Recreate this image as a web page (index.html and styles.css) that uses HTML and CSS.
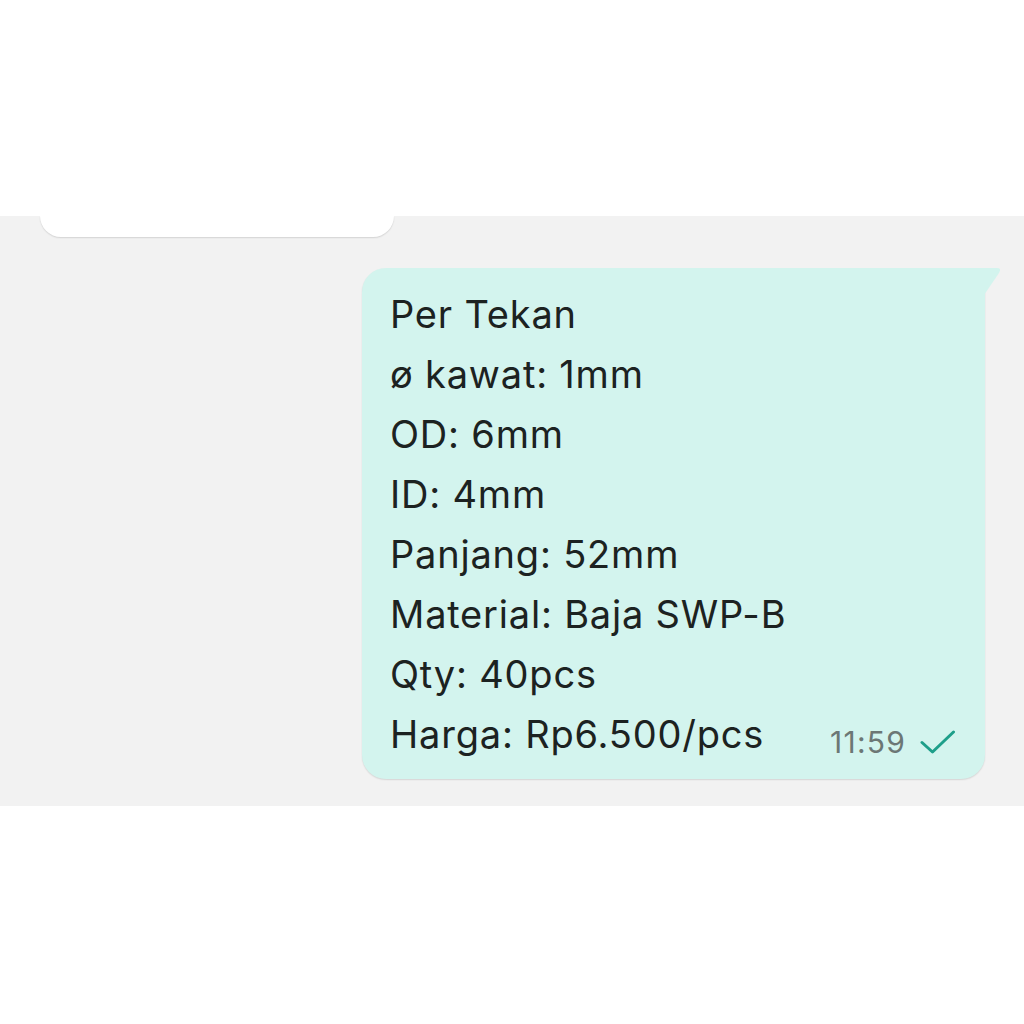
FILE: index.html
```html
<!DOCTYPE html>
<html lang="id">
<head>
<meta charset="utf-8">
<title>Chat</title>
<link rel="stylesheet" href="styles.css">
</head>
<body>
  <div class="top"></div>
  <div class="chat">
    <div class="incoming"></div>
    <div class="row-out">
      <div class="bubble-out">
        <div class="line">Per Tekan</div>
        <div class="line">ø kawat: 1mm</div>
        <div class="line">OD: 6mm</div>
        <div class="line">ID: 4mm</div>
        <div class="line">Panjang: 52mm</div>
        <div class="line">Material: Baja SWP-B</div>
        <div class="line">Qty: 40pcs</div>
        <div class="line">Harga: Rp6.500/pcs</div>
        <div class="meta">
          <span class="time">11:59</span>
          <svg class="check" width="36" height="26" viewBox="0 0 36 26">
            <path d="M2 13.5 L12.5 23 L33.5 3" fill="none" stroke="#1e9f8a" stroke-width="3" stroke-linecap="round" stroke-linejoin="round"/>
          </svg>
        </div>
        <svg class="tail" width="20" height="34" viewBox="0 0 20 34">
          <path d="M0 0 H15 Q20 0 17 5 L0 30 Z" fill="#d3f4ee"/>
        </svg>
      </div>
    </div>
  </div>
  <div class="bottom"></div>
</body>
</html>
```

FILE: styles.css
```css
html, body {
  margin: 0;
  padding: 0;
  background: #ffffff;
}
body {
  font-family: Inter, "Noto Sans", "Liberation Sans", sans-serif;
  width: 1024px;
  height: 1024px;
  overflow: hidden;
}
.top {
  height: 216px;
  background: #ffffff;
}
.chat {
  height: 590px;
  background: #f2f2f2;
  overflow: hidden;
}
.incoming {
  margin-left: 40px;
  width: 354px;
  height: 21px;
  background: #ffffff;
  border-radius: 0 0 22px 22px;
  box-shadow: 0 1px 1.5px rgba(0, 0, 0, 0.13);
}
.row-out {
  display: flex;
  justify-content: flex-end;
  padding-right: 39px;
  margin-top: 31px;
}
.bubble-out {
  position: relative;
  width: 623px;
  box-sizing: border-box;
  background: #d3f4ee;
  border-radius: 0 0 24px 24px;
  border-top-left-radius: 24px;
  padding: 16px 28px 15px 28px;
  box-shadow: 0 1px 1.5px rgba(0, 0, 0, 0.12);
}
.line {
  font-size: 38px;
  line-height: 60px;
  color: #1c2221;
  letter-spacing: 0.8px;
}
.meta {
  position: absolute;
  right: 29px;
  bottom: 22px;
  display: flex;
  align-items: center;
  gap: 14px;
}
.time {
  font-size: 30px;
  line-height: 30px;
  letter-spacing: 1.2px;
  color: #6c7775;
}
.check {
  display: block;
}
.tail {
  position: absolute;
  top: 0;
  right: -17px;
  display: block;
}
```
